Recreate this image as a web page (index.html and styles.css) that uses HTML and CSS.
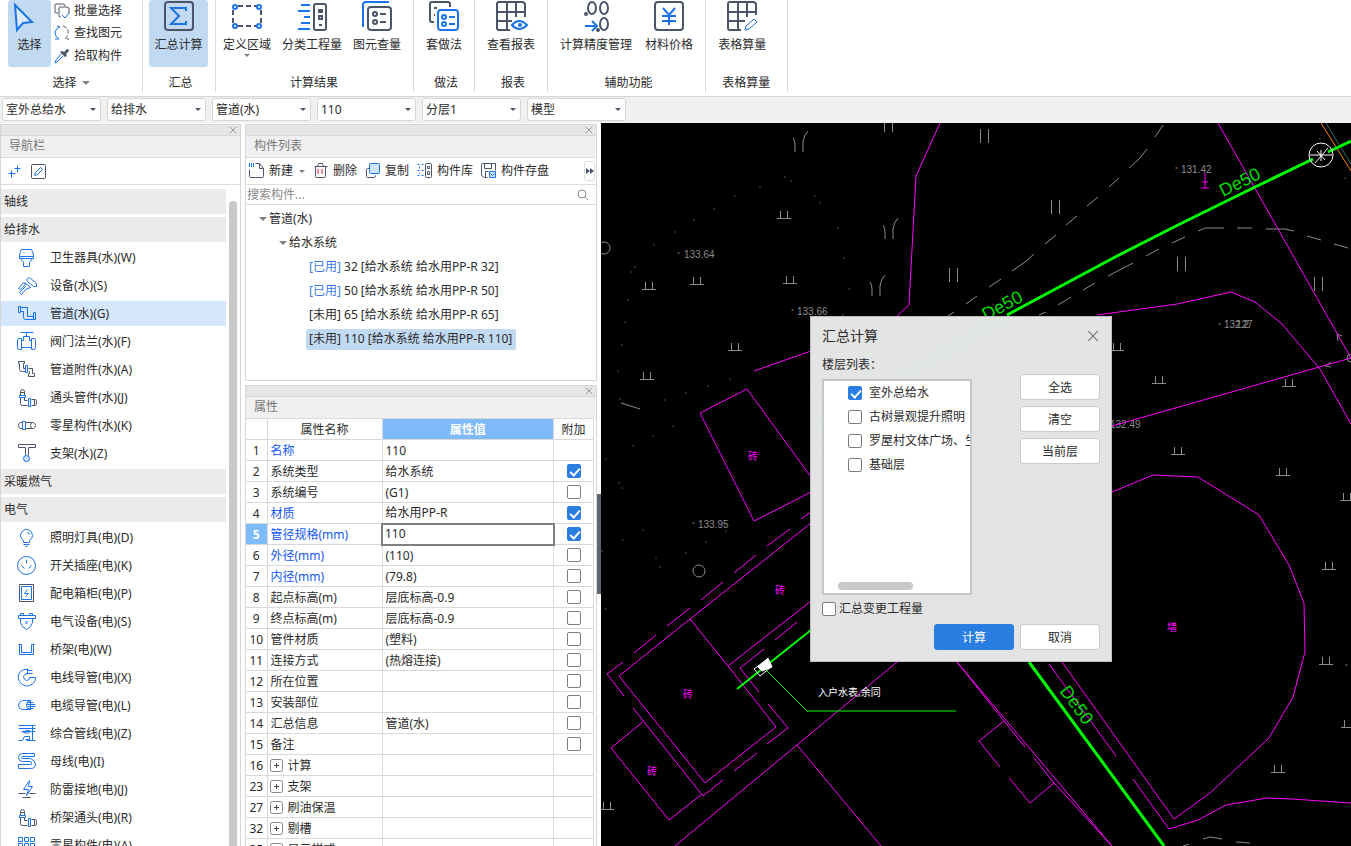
FILE: index.html
```html
<!DOCTYPE html>
<html lang="zh-CN">
<head>
<meta charset="utf-8">
<title>汇总计算</title>
<link rel="stylesheet" href="styles.css">
</head>
<body>

<!-- shared icon shapes -->
<svg class="defs" aria-hidden="true">
  <symbol id="fitting" viewBox="-.5 -.5 20 20">
    <path class="dk" d="M3 7V3Q3 1 5 1T7 3V7M3 4H7M3 9V15Q3 17 5 17H10M7 9V12H10M14 11H18Q19 11 19 14T18 17H14M17 11V17"/>
    <path class="bl" d="M2 7H8V9H2ZM11 10H13V18H11Z"/>
  </symbol>
  <symbol id="expand" viewBox="0 0 13 13"><rect x=".5" y=".5" width="12" height="12" rx="2" stroke="#888"/><path d="M4 6.500H9M6.500 4V9" stroke="#445"/></symbol>
  <symbol id="cross" viewBox="0 0 10 10"><path d="M1 1L9 9M9 1L1 9"/></symbol>
  <symbol id="tuft" viewBox="0 0 14 9"><path d="M0 8.500H14M3.500 1V8M10.500 1V8"/></symbol>
  <symbol id="bars" viewBox="0 0 9 15"><path d="M.5 0V14M8.500 0V14"/></symbol>
  <symbol id="reed" viewBox="0 0 16 22"><path d="M0 7Q2 10 2 14V21M10 21V11Q11 4 15 0"/></symbol>
</svg>

<div class="app">

<header class="ribbon">
  <section class="group first">
    <div class="tools">
      <button type="button" class="tool pick on">
        <svg class="big" viewBox="0 0 30 30"><path class="bl fat" fill="#dcebfc" d="M3 4L20 21L11 22L5 29Z"/></svg>
        <span>选择</span>
      </button>
      <div class="small-tools">
        <button type="button"><svg viewBox="0 0 16 16"><path class="dk" d="M4 10H2Q1 10 1 9V2Q1 1 2 1H9Q11 1 11 3"/><path class="dk" d="M7 14H6Q5 14 5 13V5Q5 4 6 4H13Q15 4 15 6V11"/><path class="bl" d="M8 12L11 15L15 10"/></svg>批量选择</button>
        <button type="button"><svg viewBox="0 0 16 16"><path class="bl" d="M6 2Q2 3 1 7Q1 12 5 14M6 2L3 1M5 14H1"/><path class="dk" stroke-dasharray="4 2" d="M9 1Q15 3 14 8Q14 11 11 14H15"/></svg>查找图元</button>
        <button type="button"><svg viewBox="0 0 16 16"><path fill="#4b5468" d="M8 3L10 4L13 1Q15 1 15 3L12 6L13 8L11 9L6 4Z"/><path class="bl" d="M9 8L3 14L1 15L2 12L7 6"/></svg>拾取构件</button>
      </div>
    </div>
    <h2>选择 <i class="tri"></i></h2>
  </section>

  <section class="group sum">
    <div class="tools">
      <button type="button" class="tool wide on">
        <svg class="big" viewBox="0 0 30 30"><rect class="dk fat" x="1" y="1" width="28" height="28" rx="3"/><path class="bl fat" d="M22 10V7H7L15 15L7 23H22V20"/></svg>
        <span>汇总计算</span>
      </button>
    </div>
    <h2>汇总</h2>
  </section>

  <section class="group results">
    <div class="tools">
      <button type="button" class="tool">
        <svg class="big" viewBox="0 0 30 30"><path class="dk fat" stroke-dasharray="5 3" d="M6 5H25M6 25H25M1 9V22M29 9V22"/><g class="bl fat"><circle cx="3" cy="6" r="2"/><circle cx="27" cy="6" r="2"/><circle cx="3" cy="25" r="2"/><circle cx="27" cy="25" r="2"/></g></svg>
        <span>定义区域</span><i class="tri tiny"></i>
      </button>
      <button type="button" class="tool">
        <svg class="big" viewBox="0 0 30 30"><path class="bl fat" d="M4 4H13M1 10H13M7 16H13M4 22H13M1 28H13"/><rect class="dk fat" x="17" y="3" width="12" height="26" rx="2"/><path class="dk fat" d="M22 9H25V11H22ZM22 15H25V18H22ZM22 24H25"/></svg>
        <span>分类工程量</span>
      </button>
      <button type="button" class="tool">
        <svg class="big" viewBox="0 0 30 30"><path class="bl fat" d="M1 26V4Q1 1 4 1H27"/><rect class="dk fat" x="6" y="6" width="23" height="23" rx="3"/><g class="dk fat"><circle cx="13" cy="13" r="2"/><circle cx="13" cy="21" r="2"/><path d="M18 13H24M18 21H24"/></g></svg>
        <span>图元查量</span>
      </button>
    </div>
    <h2>计算结果</h2>
  </section>

  <section class="group">
    <div class="tools">
      <button type="button" class="tool">
        <svg class="big" viewBox="0 0 30 30"><path class="dk fat" d="M5 21H3Q1 21 1 19V3Q1 1 3 1H19Q21 1 21 3V6M5 7H8M5 14H6"/><rect class="bl fat" x="9" y="9" width="20" height="20" rx="3"/><g class="bl fat"><circle cx="15" cy="16" r="2"/><circle cx="15" cy="23" r="2"/><path d="M20 16H26M20 23H26"/></g></svg>
        <span>套做法</span>
      </button>
    </div>
    <h2>做法</h2>
  </section>

  <section class="group">
    <div class="tools">
      <button type="button" class="tool">
        <svg class="big" viewBox="0 0 30 30"><path class="dk fat" d="M14 29H3Q1 29 1 27V3Q1 1 3 1H26Q29 1 29 4V16M1 11H29M1 20H16M11 1V29M20 1V16"/><path class="bl fat" d="M16 24Q23 16 31 24Q23 32 16 24Z"/><circle cx="24" cy="24" r="2" fill="#1a73e8"/></svg>
        <span>查看报表</span>
      </button>
    </div>
    <h2>报表</h2>
  </section>

  <section class="group">
    <div class="tools">
      <button type="button" class="tool">
        <svg class="big" viewBox="0 0 30 30"><g class="dk fat"><ellipse cx="11" cy="7" rx="4" ry="6"/><ellipse cx="23" cy="7" rx="4" ry="6"/><ellipse cx="23" cy="23" rx="4" ry="6"/></g><path class="bl fat" d="M4 25H15M11 20L16 25L11 30"/><g fill="#4b5468"><circle cx="5" cy="13" r="2"/><circle cx="17" cy="29" r="2"/></g></svg>
        <span>计算精度管理</span>
      </button>
      <button type="button" class="tool">
        <svg class="big" viewBox="0 0 30 30"><rect class="dk fat" x="1" y="1" width="28" height="28" rx="3"/><path class="bl fat" d="M9 7L15 14L21 7M8 15H22M8 20H22M15 14V24"/></svg>
        <span>材料价格</span>
      </button>
    </div>
    <h2>辅助功能</h2>
  </section>

  <section class="group last">
    <div class="tools">
      <button type="button" class="tool">
        <svg class="big" viewBox="0 0 30 30"><path class="dk fat" d="M14 29H3Q1 29 1 27V3Q1 1 3 1H26Q29 1 29 4V14M1 11H29M1 20H18M11 1V29M20 1V16"/><path class="bl" d="M18 29L19 25L27 18L30 21L22 28Z"/></svg>
        <span>表格算量</span>
      </button>
    </div>
    <h2>表格算量</h2>
  </section>
</header>

<div class="filters">
  <label class="combo"><select aria-label="楼层"><option>室外总给水</option></select></label>
  <label class="combo"><select aria-label="专业"><option>给排水</option></select></label>
  <label class="combo"><select aria-label="构件类型"><option>管道(水)</option></select></label>
  <label class="combo"><select aria-label="构件"><option>110</option></select></label>
  <label class="combo"><select aria-label="分层"><option>分层1</option></select></label>
  <label class="combo"><select aria-label="显示"><option>模型</option></select></label>
</div>

<main class="work">

<!-- navigation -->
<aside class="panel nav">
  <div class="grip"><button type="button" aria-label="关闭导航栏"><svg><use href="#cross"/></svg></button></div>
  <h3>导航栏</h3>
  <div class="bar">
    <button type="button" aria-label="展开"><svg viewBox="0 0 16 16"><path class="bl" d="M3 7V14M0 10H7M9 2V9M6 5H12"/></svg></button>
    <button type="button" aria-label="编辑"><svg viewBox="0 0 16 16"><rect class="dk" x="1" y="1" width="14" height="14" rx="1"/><path class="bl" d="M4 12L5 9L10 4L12 6L7 11Z"/></svg></button>
  </div>
  <div class="scroller">
    <ul class="menu">
      <li class="head">轴线</li>
      <li class="head">给排水</li>
      <li><a href="#"><svg viewBox="0 0 20 20"><path class="bl" d="M4 1H14Q16 4 16 8H2Q2 4 4 1ZM2 8V10H16V8M3 10L6 14V18H12V14L15 10M6 4H7"/></svg>卫生器具(水)(W)</a></li>
      <li><a href="#"><svg viewBox="0 0 20 20"><path class="bl" d="M9 3L12 1L19 7V10H16L10 5ZM7 6L13 11L8 13L4 18L2 16L8 10M1 12L6 6L8 8L3 13Z"/></svg>设备(水)(S)</a></li>
      <li class="on"><a href="#"><svg viewBox="0 0 20 20"><path class="bl" d="M1 2H3V8H1ZM3 3H10V12H16M3 7H6V13Q6 15 8 15H16M16 8H18V15H16Z"/></svg>管道(水)(G)</a></li>
      <li><a href="#"><svg viewBox="0 0 20 20"><path class="bl" d="M3 0H16M9 0V4M6 4H12V8M6 4V8H4M12 8H14M4 15H14M4 6H1Q0 6 0 8V15Q0 17 2 17H4ZM14 6H17Q18 6 18 8V15Q18 17 16 17H14Z"/></svg>阀门法兰(水)(F)</a></li>
      <li><a href="#"><svg viewBox="0 0 20 20"><path class="dk" d="M1 1H7V3H6V8H8M1 1V3H2V9Q2 11 5 11H8M11 8H15V13H17V16H11V13H12V11"/><path class="bl" d="M8 5H10V12H8Z"/></svg>管道附件(水)(A)</a></li>
      <li><a href="#"><svg><use href="#fitting"/></svg>通头管件(水)(J)</a></li>
      <li><a href="#"><svg viewBox="0 0 20 20"><path class="dk" d="M5 6H3Q1 7 1 9T3 12H5M8 6H16Q18 7 18 9T16 12H8M14 6Q12 9 14 12"/><path class="bl" d="M5 5H8V13H5Z"/></svg>零星构件(水)(K)</a></li>
      <li><a href="#"><svg viewBox="0 0 20 20"><path class="dk" d="M1 0H18V3H11V11M1 0V3H8V11"/><circle class="bl" cx="9" cy="14" r="3" fill="#c7dffb"/></svg>支架(水)(Z)</a></li>
      <li class="head">采暖燃气</li>
      <li class="head">电气</li>
      <li><a href="#"><svg viewBox="0 0 20 20"><path class="bl" d="M6 14V12Q3 10 3 7Q4 1 9 1Q14 1 15 7Q15 10 12 12V14ZM10 4Q12 4 12 6M6 16H12M8 18H10"/></svg>照明灯具(电)(D)</a></li>
      <li><a href="#"><svg viewBox="0 0 20 20"><circle class="bl" cx="9" cy="9" r="9"/><path class="bl" d="M9 3V7M4 9L7 12M14 9L11 12"/></svg>开关插座(电)(K)</a></li>
      <li><a href="#"><svg viewBox="0 0 20 20"><path class="dk" d="M2 0H16V17H2Z"/><path class="bl" d="M4 2H14V15H4ZM10 5L7 9H11L8 12"/></svg>配电箱柜(电)(P)</a></li>
      <li><a href="#"><svg viewBox="0 0 20 20"><path class="bl" d="M1 3H18V6H1ZM3 3V1H6V3M12 3V1H15V3M3 6V10Q4 15 9 17Q14 15 15 10V6"/><circle class="bl" cx="9" cy="10" r="1"/></svg>电气设备(电)(S)</a></li>
      <li><a href="#"><svg viewBox="0 0 20 20"><path class="bl" d="M1 4H4V12H14V4H17M2 4V14H16V4"/></svg>桥架(电)(W)</a></li>
      <li><a href="#"><svg viewBox="0 0 20 20"><path class="bl" d="M10 1Q6 0 3 3Q-1 8 2 13Q6 19 12 17Q18 15 18 9H12Q12 12 9 12Q6 11 6 8Q7 5 10 5H15M10 2H15M10 0V6"/></svg>电线导管(电)(X)</a></li>
      <li><a href="#"><svg viewBox="0 0 20 20"><path class="bl" d="M13 4H5Q1 5 1 9T5 13H13Q9 13 9 9Q9 5 13 4V13M9 6H16M9 8H18M10 10H18M11 12H16"/></svg>电缆导管(电)(L)</a></li>
      <li><a href="#"><svg viewBox="0 0 20 20"><path class="bl" d="M1 1H18M1 4H18M15 1V16M4 7H18M6 8Q10 4 13 7Q10 10 6 8M1 16H5L7 12H12V15H8M9 16H18"/></svg>综合管线(电)(Z)</a></li>
      <li><a href="#"><svg viewBox="0 0 20 20"><path class="bl" d="M17 1H5Q1 1 1 5T5 9H13Q14 9 14 11T13 12H1V16H13Q18 16 18 12T13 6H5Q4 6 4 5T5 4H17Z"/></svg>母线(电)(I)</a></li>
      <li><a href="#"><svg viewBox="0 0 20 20"><path class="bl" d="M12 0L6 9H11L9 15L15 6H11Z"/><path class="dk" d="M1 13H8M12 13H18M5 17H13"/></svg>防雷接地(电)(J)</a></li>
      <li><a href="#"><svg><use href="#fitting"/></svg>桥架通头(电)(R)</a></li>
      <li><a href="#"><svg viewBox="0 0 20 20"><path class="bl" d="M1 1H5V5H1ZM7 1H11V5H7ZM13 1H17V5H13ZM1 7H5V11H1ZM7 7H11V11H7ZM13 7H17V11H13ZM1 13H5V17H1ZM7 13H11V17H7Z"/></svg>零星构件(电)(A)</a></li>
    </ul>
    <div class="thumb"></div>
  </div>
</aside>

<div class="middle">

<!-- component list -->
<section class="panel parts">
  <div class="grip"><button type="button" aria-label="关闭构件列表"><svg><use href="#cross"/></svg></button></div>
  <h3>构件列表</h3>
  <div class="bar">
    <button type="button"><svg viewBox="0 0 16 16"><path class="dk" d="M0 6V13Q0 14 1 14H13Q14 14 14 13V5L10 0H6M10 0V5H14"/><path stroke="#1a73e8" stroke-width="4" stroke-dasharray="1 1" d="M0 2H5"/></svg>新建 <i class="tri tiny"></i></button>
    <button type="button"><svg viewBox="0 0 16 16"><path class="dk" d="M1 3H14M2 3V13Q2 14 3 14H11Q12 14 12 13V3M4 3L5 0H9L10 3"/><path stroke="#e02020" d="M5 6V11M9 6V11"/></svg>删除</button>
    <button type="button"><svg viewBox="0 0 16 16"><path class="dk" d="M4 5H2Q1 5 1 6V13Q1 14 2 14H9Q10 14 10 12"/><rect class="bl" x="4" y="0" width="10" height="10" rx="1" fill="#cfe2fb"/></svg>复制</button>
    <button type="button"><svg viewBox="0 0 16 16"><path class="bl" d="M0 1H2M4 1H6M0 7H2M4 7H6M0 12H2M4 12H6M2 3V5M2 9V10"/><rect class="dk" x="8" y="0" width="6" height="14" rx="1"/><path class="dk" d="M10 3H12V5H10ZM10 8H12V11H10Z"/></svg>构件库</button>
    <button type="button"><svg viewBox="0 0 16 16"><path class="dk" d="M6 14H3L0 12V1Q0 0 1 0H14V7M3 0V5H10V0M4 14V8H7"/><path class="bl" fill="#cfe2fb" d="M8 8H14V14H8ZM9 10L11 12L13 10"/></svg>构件存盘</button>
    <button type="button" class="more" aria-label="更多"><svg viewBox="0 0 8 6"><path fill="#4b5468" d="M0 0L4 3L0 6ZM4 0L8 3L4 6Z"/></svg></button>
  </div>
  <div class="search">
    <input type="text" placeholder="搜索构件..." aria-label="搜索构件">
    <svg viewBox="0 0 12 12"><circle cx="5" cy="5" r="4"/><path d="M8 8L11 11"/></svg>
  </div>
  <ul class="tree">
    <li class="l1"><i class="tri"></i>管道(水)</li>
    <li class="l2"><i class="tri"></i>给水系统</li>
    <li class="l3"><span><b>[已用]</b> 32 [给水系统 给水用PP-R 32]</span></li>
    <li class="l3"><span><b>[已用]</b> 50 [给水系统 给水用PP-R 50]</span></li>
    <li class="l3"><span>[未用] 65 [给水系统 给水用PP-R 65]</span></li>
    <li class="l3"><span class="on">[未用] 110 [给水系统 给水用PP-R 110]</span></li>
  </ul>
</section>

<!-- properties -->
<section class="panel props">
  <div class="grip"><button type="button" aria-label="关闭属性"><svg><use href="#cross"/></svg></button></div>
  <h3>属性</h3>
  <table>
    <colgroup><col class="c-no"><col class="c-name"><col><col class="c-add"></colgroup>
    <thead>
      <tr><th></th><th>属性名称</th><th class="hot">属性值</th><th>附加</th></tr>
    </thead>
    <tbody>
      <tr><td>1</td><td class="key">名称</td><td>110</td><td></td></tr>
      <tr><td>2</td><td>系统类型</td><td>给水系统</td><td><input type="checkbox" aria-label="附加 系统类型" checked></td></tr>
      <tr><td>3</td><td>系统编号</td><td>(G1)</td><td><input type="checkbox" aria-label="附加 系统编号"></td></tr>
      <tr><td>4</td><td class="key">材质</td><td>给水用PP-R</td><td><input type="checkbox" aria-label="附加 材质" checked></td></tr>
      <tr><td class="hot">5</td><td class="key">管径规格(mm)</td><td class="edit"><input type="text" value="110" aria-label="管径规格"></td><td><input type="checkbox" aria-label="附加 管径规格" checked></td></tr>
      <tr><td>6</td><td class="key">外径(mm)</td><td>(110)</td><td><input type="checkbox" aria-label="附加 外径"></td></tr>
      <tr><td>7</td><td class="key">内径(mm)</td><td>(79.8)</td><td><input type="checkbox" aria-label="附加 内径"></td></tr>
      <tr><td>8</td><td>起点标高(m)</td><td>层底标高-0.9</td><td><input type="checkbox" aria-label="附加 起点标高"></td></tr>
      <tr><td>9</td><td>终点标高(m)</td><td>层底标高-0.9</td><td><input type="checkbox" aria-label="附加 终点标高"></td></tr>
      <tr><td>10</td><td>管件材质</td><td>(塑料)</td><td><input type="checkbox" aria-label="附加 管件材质"></td></tr>
      <tr><td>11</td><td>连接方式</td><td>(热熔连接)</td><td><input type="checkbox" aria-label="附加 连接方式"></td></tr>
      <tr><td>12</td><td>所在位置</td><td></td><td><input type="checkbox" aria-label="附加 所在位置"></td></tr>
      <tr><td>13</td><td>安装部位</td><td></td><td><input type="checkbox" aria-label="附加 安装部位"></td></tr>
      <tr><td>14</td><td>汇总信息</td><td>管道(水)</td><td><input type="checkbox" aria-label="附加 汇总信息"></td></tr>
      <tr><td>15</td><td>备注</td><td></td><td><input type="checkbox" aria-label="附加 备注"></td></tr>
      <tr><td>16</td><td><svg><use href="#expand"/></svg>计算</td><td></td><td></td></tr>
      <tr><td>23</td><td><svg><use href="#expand"/></svg>支架</td><td></td><td></td></tr>
      <tr><td>27</td><td><svg><use href="#expand"/></svg>刷油保温</td><td></td><td></td></tr>
      <tr><td>32</td><td><svg><use href="#expand"/></svg>剔槽</td><td></td><td></td></tr>
      <tr><td>35</td><td><svg><use href="#expand"/></svg>显示样式</td><td></td><td></td></tr>
    </tbody>
  </table>
</section>

</div>

<div class="splitter"><i></i></div>

<!-- drawing area -->
<section class="cad">
  <svg class="plan">
  <g transform="translate(-601 -123)">
    <g class="gray">
      <use href="#tuft" x="777" y="210" width="14" height="9"/><use href="#tuft" x="642" y="281" width="14" height="9"/>
      <use href="#tuft" x="690" y="276" width="14" height="9"/><use href="#tuft" x="783" y="275" width="14" height="9"/>
      <use href="#tuft" x="728" y="342" width="14" height="9"/><use href="#tuft" x="640" y="371" width="14" height="9"/>
      <use href="#tuft" x="600" y="801" width="14" height="9"/><use href="#tuft" x="1110" y="342" width="14" height="9"/>
      <use href="#tuft" x="1152" y="375" width="14" height="9"/><use href="#tuft" x="1282" y="378" width="14" height="9"/>
      <use href="#tuft" x="1171" y="446" width="14" height="9"/><use href="#tuft" x="1276" y="467" width="14" height="9"/>
      <use href="#tuft" x="1340" y="492" width="14" height="9"/><use href="#tuft" x="1322" y="561" width="14" height="9"/>
      <use href="#tuft" x="1319" y="656" width="14" height="9"/><use href="#tuft" x="1341" y="719" width="14" height="9"/>
      <use href="#tuft" x="1271" y="764" width="14" height="9"/>
      <use href="#bars" x="884" y="118" width="9" height="15"/><use href="#bars" x="980" y="129" width="9" height="15"/>
      <use href="#bars" x="949" y="268" width="9" height="15"/><use href="#bars" x="1051" y="200" width="9" height="15"/>
      <use href="#bars" x="1177" y="257" width="9" height="15"/><use href="#bars" x="1314" y="277" width="9" height="15"/>
      <use href="#reed" x="793" y="131" width="16" height="22"/><use href="#reed" x="883" y="218" width="16" height="22"/>
      <use href="#reed" x="870" y="275" width="16" height="22"/>
      <circle cx="604" cy="248" r="6"/><circle cx="699" cy="571" r="6"/><circle cx="1351" cy="358" r="4"/>
      <path d="M621 403L640 409"/>
      <path d="M1163 125L1155 137M1147 149L1139 159 1129 168M1119 178L1109 187M1098 197L1087 206M1077 216L1066 225M1056 235L1045 244M1034 254L1025 262 1012 271M1001 279L989 287M977 296L966 304M954 312L948 316"/>
      <path d="M1348 248L1334 244M1321 240L1307 236M1294 231L1285 229 1266 229M1252 228H1237M1224 228H1205L1198 231M1185 237L1172 243M1159 249L1146 256M1133 263L1108 276M1095 283L1083 290M1071 297L1058 305M1046 312L1039 315"/>
      <path d="M1183 846L1189 844M1203 839L1210 837 1222 839M1236 842L1250 843"/>
      <path d="M1338 341L1337 334 1342 336M1331 362L1325 366 1331 367"/>
    </g>
    <!-- zero length dashes with square caps give single dots -->
    <path class="dots" d="M785 177h0M791 181h0M760 187h0M735 196h0M714 209h0M694 220h0M675 232h0M654 245h0M635 267h0M631 272h0M628 300h0M625 322h0M622 345h0M815 196h0M820 203h0M838 228h0M844 258h0M849 289h0M843 315h0M618 371h0M620 399h0M686 393h0M665 400h0M708 386h0M730 379h0M673 426h0M653 436h0M633 446h0M606 459h0M619 483h0M622 488h0M643 530h0M623 540h0M602 551h0M656 558h0M660 567h0M706 542h0M686 553h0M726 531h0M606 609h0M678 253h1M792 310h1M1176 168h1M1219 324h1M693 523h1M1320 139h0M1345 178h0M1346 665h1"/>
    <g class="level">
      <text x="684" y="258">133.64</text><text x="797" y="315">133.66</text><text x="1181" y="173">131.42</text>
      <text x="1224" y="328">132.2</text><text x="1236" y="328">127</text><text x="1110" y="428">132.49</text><text x="698" y="528">133.95</text>
    </g>
    <path d="M1321 123L1351 171" stroke="#ff7f00"/>
    <path d="M1326 123L1351 164" stroke="#2f6b62"/>
    <g class="mag">
      <path d="M940 123L916 176 909 305 897 316M811 351L754 371"/>
      <path d="M1218 123L1351 358 1112 426M1097 315L1177 304 1231 292 1255 302 1282 324 1320 369 1351 424"/>
      <path d="M1205 173V188M1201 188H1209M1202 182H1208"/>
      <path d="M811 477L747 389 700 413 754 521 811 492"/>
      <path d="M811 523L690 619 619 676 705 783 776 727 728 666 811 601M690 619L728 666"/>
      <path d="M811 512L801 519M790 529L767 546M756 555L734 573M723 582L701 600M690 608L667 626M656 635L634 653M623 662L607 674 624 696M633 708L703 796 723 780M734 771L757 753M767 744L788 728 768 704M759 692L740 668 764 649M775 640L797 622"/>
      <path d="M644 721L611 748 669 820 702 794"/>
      <path d="M675 846L797 745 897 662M797 745L881 846"/>
      <path d="M1112 492L1153 475 1198 477 1259 515 1289 565 1304 603 1305 652 1293 697 1269 738 1210 793 1174 819 1062 662"/>
      <path d="M1049 664L1116 756M1133 779L1169 829 1198 820 1226 805 1267 798 1292 799 1351 803"/>
      <path d="M957 662L1112 846M957 662L1004 721 1025 747M1004 721L979 741 1000 767M1009 778L1030 803 1054 783 1034 758M1054 783L1112 846"/>
    </g>
    <g class="brick"><text x="748" y="460">砖</text><text x="775" y="594">砖</text><text x="683" y="698">砖</text><text x="647" y="775">砖</text><text x="1167" y="631">墙</text></g>
    <g class="pipe">
      <path d="M1351 141L1328 152M1313 159L1253 188 1180 224 1117 256 1007 315M1029 662L1164 846"/>
      <path class="thin" d="M811 630L737 689"/>
      <path class="hair" d="M764 668L807 711H956"/>
    </g>
    <g class="size">
      <text transform="translate(1223 197) rotate(-26)">De50</text>
      <text transform="translate(986 321) rotate(-28)">De50</text>
      <text transform="translate(1059 691) rotate(54)">De50</text>
    </g>
    <g class="white">
      <circle cx="1321" cy="155" r="12"/><path d="M1310 155H1332M1315 163L1328 148M1317 151L1325 160M1321 150V161"/>
      <path d="M754 669L766 660 771 667 760 676Z"/><path fill="#fff" d="M758 667L768 658 772 667 762 671Z"/>
    </g>
    <text class="note" x="818" y="696">入户水表,余同</text>
  </g>
  </svg>

  <form class="dialog">
    <div class="title"><h1>汇总计算</h1><button type="button" aria-label="关闭"><svg><use href="#cross"/></svg></button></div>
    <div class="cols">
      <div class="floors">
        <p>楼层列表：</p>
        <div class="list">
          <label><input type="checkbox" checked>室外总给水</label>
          <label><input type="checkbox">古树景观提升照明</label>
          <label><input type="checkbox">罗屋村文体广场、生态停车场</label>
          <label><input type="checkbox">基础层</label>
          <div class="hthumb"></div>
        </div>
      </div>
      <div class="side">
        <button type="button">全选</button>
        <button type="button">清空</button>
        <button type="button">当前层</button>
      </div>
    </div>
    <label class="change"><input type="checkbox">汇总变更工程量</label>
    <div class="actions">
      <button type="button" class="primary">计算</button>
      <button type="button">取消</button>
    </div>
  </form>
</section>

</main>
</div>
</body>
</html>
```
FILE: styles.css
```css
* { box-sizing: border-box; }
body { margin: 0; font: 12px/18px "Noto Sans", "Noto Sans CJK SC", sans-serif; color: #2b2b2b; background: #fff; }
button, input, select { font: inherit; color: inherit; }
button { border: 0; background: none; padding: 0; white-space: nowrap; }
h1, h2, h3, p, ul { margin: 0; padding: 0; font-weight: normal; }
li { list-style: none; }
a { color: inherit; text-decoration: none; }
svg { fill: none; flex: none; }
.defs { position: absolute; width: 0; height: 0; }
.dk { stroke: #4b5468; }
.bl { stroke: #1a73e8; }
.fat { stroke-width: 2; }

.app { display: flex; flex-direction: column; height: 100vh; overflow: hidden; }

.tri { display: inline-block; border: 4px solid transparent; border-top-color: #808080; border-bottom: 0; }
.tri.tiny { border-width: 3px 3px 0; }

input[type=checkbox] { appearance: none; flex: none; width: 14px; height: 14px; margin: 0; border: 1px solid #7d7d7d; border-radius: 2px; background: #fff; }
input[type=checkbox]:checked { background: #2a7de1; border-color: #2a7de1; }
input[type=checkbox]:checked::after { content: ""; display: block; width: 4px; height: 8px; margin: 1px 4px; border: solid #fff; border-width: 0 2px 2px 0; transform: rotate(42deg); }

/* ribbon */
.ribbon { display: flex; height: 96px; flex: none; }
.group { display: flex; flex-direction: column; height: 92px; padding: 0 12px; border-right: 1px solid #d9d9d9; }
.group h2 { font-size: 12px; text-align: center; margin-top: 7px; padding-left: 4px; }
.group h2 .tri { margin: 0 0 2px 2px; }
.tools { display: flex; gap: 13px; }
.tool { display: flex; flex-direction: column; align-items: center; height: 67px; border-radius: 3px; }
.tool.on { background: #c2d9f2; }
.tool.pick { width: 43px; }
.tool.wide { width: 59px; }
.tool .big { width: 30px; height: 30px; margin: 1px 0 5px; overflow: visible; }
.tool.pick .big { margin-left: -6px; }
.group.first { padding: 0 20px 0 8px; }
.group.first .tools { gap: 3px; }
.group.first h2 { padding-left: 12px; }
.group.sum { padding: 0 7px 0 6px; }
.group.results { padding: 0 12px 0 7px; }
.group.results .tools { gap: 11px; }
.group.last { padding-right: 17px; }
.small-tools { display: flex; flex-direction: column; }
.small-tools button { display: flex; align-items: center; gap: 4px; height: 23px; }
.small-tools svg { width: 16px; height: 16px; }
.small-tools button:first-child { height: 21px; }

.filters { display: flex; gap: 6px; flex: none; height: 27px; padding: 1px 2px; background: #f0f0f0; border-top: 1px solid #d6d6d6; }
.combo { position: relative; width: 99px; }
.combo select { appearance: none; width: 100%; height: 23px; padding: 0 3px; border: 1px solid #d6d6d6; border-radius: 3px; background: #fff; }
.combo::after { content: ""; position: absolute; right: 5px; top: 10px; border: 3px solid transparent; border-top-color: #4b5468; border-bottom: 0; }

/* panels */
.work { display: flex; flex: 1; min-height: 0; padding-top: 1px; }
.panel { display: flex; flex-direction: column; border: 1px solid #d6d6d6; overflow: hidden; }
.grip { display: flex; justify-content: flex-end; flex: none; height: 11px; background: #e6e6e6; border-bottom: 1px solid #d6d6d6; }
.grip button { display: flex; padding: 1px 3px; }
.grip svg { width: 8px; height: 8px; stroke: #888; }
.panel h3 { flex: none; height: 21px; padding: 1px 8px; background: #f0f0f0; color: #777; font-size: 12px; }
.bar { display: flex; align-items: center; flex: none; height: 28px; border: solid #dcdcdc; border-width: 1px 0; }
.bar button { display: flex; align-items: center; gap: 4px; }
.bar svg { width: 16px; height: 16px; }
.nav { width: 241px; flex: none; margin-right: 4px; border-bottom: 0; }
.nav .bar { gap: 6px; padding: 0 7px; }
.scroller { display: flex; flex: 1; min-height: 0; gap: 3px; padding-top: 4px; }
.menu { flex: 1; }
.menu li { height: 25px; margin-bottom: 3px; line-height: 25px; }
.menu .head { padding-left: 3px; background: #ebebeb; }
.menu .on { background: #d4e7fd; }
.menu a { display: flex; align-items: center; gap: 13px; padding-left: 16px; }
.menu svg { width: 20px; height: 20px; }
/* puts one pixel strokes on whole pixels */
.menu .dk, .menu .bl, .bar .dk, .bar .bl { transform: translate(.5px, .5px); }
.thumb { width: 8px; margin: 12px 3px 0 0; border-radius: 4px 4px 0 0; background: #c9c9c9; }

.middle { display: flex; flex-direction: column; width: 352px; flex: none; gap: 4px; }
.parts { height: 257px; flex: none; }
.parts .bar { gap: 8px; padding: 0 1px 0 3px; }
.parts .bar .tri { margin-left: 2px; }
.bar .more { margin-left: auto; width: 11px; height: 20px; justify-content: center; border: 1px solid #dcdcdc; border-radius: 3px; }
.bar .more svg { width: 8px; height: 6px; }
.search { display: flex; align-items: center; flex: none; height: 20px; padding-right: 7px; border-bottom: 1px solid #dcdcdc; }
.search input { flex: 1; height: 18px; padding: 0 1px; border: 0; outline: 0; }
.search input::placeholder { color: #8a8a8a; }
.search svg { width: 12px; height: 12px; stroke: #8a8a8a; }
.tree { padding-top: 2px; }
.tree li { display: flex; align-items: center; height: 24px; }
.tree .tri { margin-right: 2px; }
.tree .l1 { padding-left: 13px; }
.tree .l2 { padding-left: 33px; }
.tree .l3 { padding-left: 60px; }
.tree span { padding: 1px 4px 2px 3px; border-radius: 2px; }
.tree b { font-weight: normal; color: #3c78e0; }
.tree .on { background: #c2d9f2; }

.props { flex: 1; min-height: 0; border-bottom: 0; }
table { flex: none; width: 348px; table-layout: fixed; border-collapse: collapse; }
th, td { height: 21px; padding: 1px 3px 0; border: 1px solid #d9d9d9; border-left-width: 0; font-weight: normal; line-height: 18px; white-space: nowrap; overflow: hidden; }
tr > :first-child { text-align: center; padding: 1px 0 0; }
td:last-child { padding: 0; }
.c-no { width: 21px; }
.c-name { width: 115px; }
.c-add { width: 40px; }
td svg { width: 13px; height: 13px; margin: 0 5px 0 -1px; vertical-align: -2px; }
td input[type=checkbox] { display: block; margin: 0 auto; }
.key { color: #1557f0; }
.hot { background: #80bbf9; color: #fff; font-weight: bold; }
.edit { border: 2px solid #808080; padding: 0 2px; }
.edit input { display: block; width: 100%; height: 17px; padding: 0; border: 0; outline: 0; }

.splitter { display: flex; align-items: center; width: 4px; flex: none; }
.splitter i { width: 4px; height: 100px; margin-top: 118px; background: #5c6773; }

/* drawing */
.cad { position: relative; flex: 1; margin-top: -1px; background: #000; overflow: hidden; }
.plan { display: block; width: 100%; height: 100%; }
.gray { stroke: #8c8c8c; }
.dots { stroke: #999; stroke-width: 1; stroke-linecap: square; }
.level { fill: #8c8c8c; font: 10px "Liberation Sans", sans-serif; }
.mag { stroke: #f0f; }
.brick { fill: #f0f; font-size: 10px; }
.pipe { stroke: #0f0; stroke-width: 3; }
.thin { stroke-width: 2; }
.hair { stroke-width: 1; }
.size { fill: #0d0; font: 18px "Liberation Sans", sans-serif; }
.white { stroke: #fff; }
.note { fill: #fff; font-size: 10px; }

.dialog { position: absolute; left: 209px; top: 193px; width: 302px; padding: 0 11px 11px; border: 1px solid #bfc0c2; background: linear-gradient(150deg, #e4e4e5 12%, #e2e6e2 22%, #e5e3e5 32%, #e3e3e3 75%, #e4e4e5); }
.title { display: flex; align-items: center; justify-content: space-between; height: 38px; }
.title h1 { font-size: 14px; }
.title button { display: flex; padding: 1px; }
.title svg { width: 12px; height: 12px; stroke: #777; }
.cols { display: flex; justify-content: space-between; }
.floors p { height: 24px; padding-top: 1px; }
.list { position: relative; width: 150px; height: 216px; border: 2px solid #c6c7ca; background: #fff; overflow: hidden; }
.list label { display: flex; align-items: center; gap: 7px; height: 24px; padding-left: 24px; white-space: nowrap; }
.hthumb { position: absolute; left: 14px; bottom: 3px; width: 75px; height: 8px; border-radius: 4px; background: #c9c9c9; }
.side { display: flex; flex-direction: column; gap: 6px; padding-top: 19px; }
.dialog .side button, .actions button { width: 80px; height: 26px; padding-top: 1px; border: 1px solid #c9c9c9; border-radius: 3px; background: #fff; }
.change { display: flex; align-items: center; gap: 3px; height: 28px; padding-left: 0; }
.actions { display: flex; justify-content: flex-end; gap: 6px; margin-top: 1px; }
.dialog .actions .primary { background: #2a7de1; border-color: #2a7de1; color: #fff; }
```
